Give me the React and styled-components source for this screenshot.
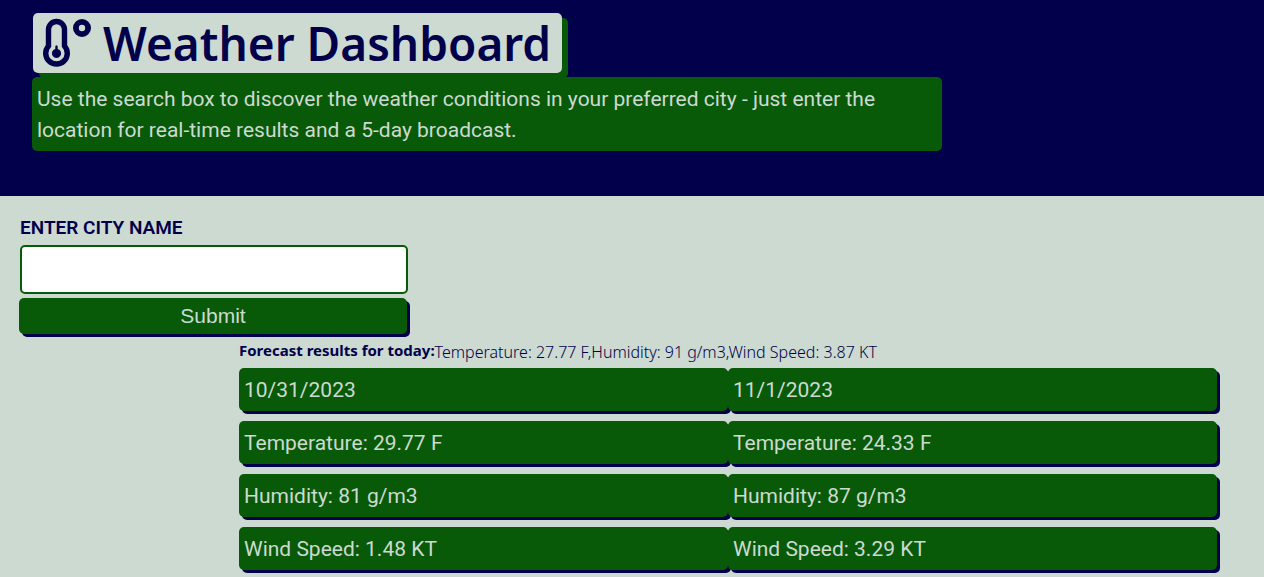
import React from "react";
import styled, { createGlobalStyle, ThemeProvider } from "styled-components";

const theme = {
  navy: "#02004b",
  green: "#085a08",
  mist: "#ccdad1",
  radius: "5px",
};

const GlobalStyle = createGlobalStyle`
  *, *::before, *::after { box-sizing: border-box; }
  body {
    margin: 0;
    background: ${theme.mist};
    color: ${theme.navy};
    font-family: Roboto, "Liberation Sans", sans-serif;
  }
`;

const Header = styled.header`
  display: flex;
  flex-direction: column;
  align-items: flex-start;
  gap: 4px;
  padding: 13px 0 45px 32px;
  background: ${({ theme }) => theme.navy};
`;

const Title = styled.h1`
  display: flex;
  align-items: center;
  gap: 11px;
  min-height: 60px;
  margin: 0 0 0 1px;
  padding: 0 11px 0 9px;
  border-radius: ${({ theme }) => theme.radius};
  background: ${({ theme }) => theme.mist};
  box-shadow: 6px 5px 0 ${({ theme }) => theme.green};
  font-family: "Noto Sans", sans-serif;
  font-size: 46px;
  font-weight: 600;
  line-height: 60px;
`;

const Intro = styled.p`
  width: 72vw;
  margin: 0;
  padding: 7px 5px 5px;
  border-radius: ${({ theme }) => theme.radius};
  background: ${({ theme }) => theme.green};
  color: ${({ theme }) => theme.mist};
  font-size: 21px;
  line-height: 31px;
`;

const SearchForm = styled.form`
  display: flex;
  flex-direction: column;
  width: 390px;
  max-width: 100%;
  padding: 20px 0 0 19px;
  box-sizing: content-box;
`;

const Label = styled.label`
  margin: 0 0 5px 1px;
  font-size: 19px;
  font-weight: 600;
  line-height: 24px;
  text-transform: uppercase;
`;

const CityInput = styled.input`
  height: 49px;
  margin: 0 1px 4px;
  padding: 0 10px;
  border: 2px solid ${({ theme }) => theme.green};
  border-radius: ${({ theme }) => theme.radius};
  background: #fff;
  color: ${({ theme }) => theme.navy};
  font-size: 21px;
`;

const SubmitButton = styled.button`
  height: 36px;
  margin-right: 2px;
  padding: 0;
  border: 0;
  border-radius: ${({ theme }) => theme.radius};
  background: ${({ theme }) => theme.green};
  color: ${({ theme }) => theme.mist};
  box-shadow: 3px 3px 0 ${({ theme }) => theme.navy};
  font-family: "Liberation Sans", Arial, sans-serif;
  font-size: 21px;
  cursor: pointer;
`;

const Results = styled.section`
  padding: 6px 47px 6px 239px;
`;

const Today = styled.div`
  display: flex;
  align-items: flex-start;
  margin-bottom: 6px;
  font-family: "Noto Sans", sans-serif;
`;

const TodayHeading = styled.h2`
  margin: 0;
  font-size: 15px;
  font-weight: 700;
  line-height: 20px;
`;

const TodayText = styled.p`
  margin: 2px 0 0;
  font-size: 16px;
  font-weight: 300;
  line-height: 20px;
`;

const Forecast = styled.div`
  display: grid;
  grid-template-columns: 1fr 1fr;
`;

const Day = styled.ul`
  display: flex;
  flex-direction: column;
  gap: 10px;
  margin: 0;
  padding: 0;
  list-style: none;
`;

const Reading = styled.li`
  padding: 7px 5px 5px;
  border-radius: ${({ theme }) => theme.radius};
  background: ${({ theme }) => theme.green};
  color: ${({ theme }) => theme.mist};
  box-shadow: 3px 3px 0 ${({ theme }) => theme.navy};
  font-size: 21px;
  line-height: 31px;
`;

function ThermometerIcon() {
  return (
    <svg width="50" height="50" viewBox="0 0 50 50" fill="none" aria-hidden="true">
      <path
        d="M6.5 28V11.5a8 8 0 0 1 16 0V28A10.8 10.8 0 1 1 6.5 28Z"
        stroke="currentColor"
        strokeWidth="5.4"
      />
      <path
        d="M14.5 27.3c.7 0 1.2.8 1.2 1.8v1.8a4.6 4.6 0 1 1-2.4 0v-1.8c0-1 .5-1.8 1.2-1.8Z"
        fill="currentColor"
      />
      <circle cx="40" cy="10" r="6.1" stroke="currentColor" strokeWidth="5.8" />
    </svg>
  );
}

const days = [
  ["10/31/2023", "Temperature: 29.77 F", "Humidity: 81 g/m3", "Wind Speed: 1.48 KT"],
  ["11/1/2023", "Temperature: 24.33 F", "Humidity: 87 g/m3", "Wind Speed: 3.29 KT"],
];

export default function App() {
  return (
    <ThemeProvider theme={theme}>
      <GlobalStyle />
      <Header>
        <Title>
          <ThermometerIcon />
          Weather Dashboard
        </Title>
        <Intro>
          Use the search box to discover the weather conditions in your preferred city - just
          enter the location for real-time results and a 5-day broadcast.
        </Intro>
      </Header>
      <main>
        <SearchForm onSubmit={(event) => event.preventDefault()}>
          <Label htmlFor="city">Enter city name</Label>
          <CityInput id="city" type="text" />
          <SubmitButton type="submit">Submit</SubmitButton>
        </SearchForm>
        <Results>
          <Today>
            <TodayHeading>Forecast results for today:</TodayHeading>
            <TodayText>Temperature: 27.77 F,Humidity: 91 g/m3,Wind Speed: 3.87 KT</TodayText>
          </Today>
          <Forecast>
            {days.map((readings) => (
              <Day key={readings[0]}>
                {readings.map((reading) => (
                  <Reading key={reading}>{reading}</Reading>
                ))}
              </Day>
            ))}
          </Forecast>
        </Results>
      </main>
    </ThemeProvider>
  );
}
